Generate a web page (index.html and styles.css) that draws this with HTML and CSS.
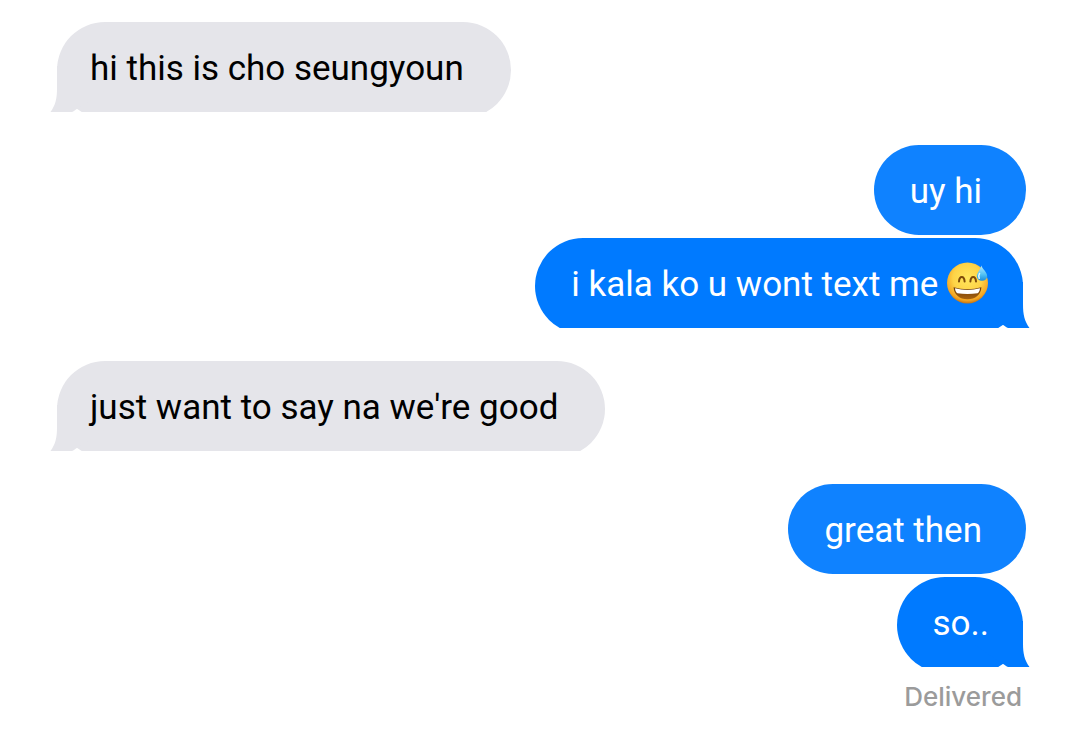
FILE: index.html
```html
<!DOCTYPE html>
<html lang="en">
<head>
    <meta charset="UTF-8">
    <meta name="viewport" content="width=device-width, initial-scale=1.0">
    <title>Messages</title>
    <link rel="stylesheet" href="styles.css">
</head>
<body>
    <!-- shared shapes -->
    <svg class="defs" width="0" height="0" aria-hidden="true">
        <symbol id="tail" viewBox="0 0 54 46" overflow="visible">
            <path d="M6 0V22C6 33 4.5 39 -0.5 46H21C23.5 45 24.5 43.5 27 42.5L54 24V0Z"/>
        </symbol>
    </svg>

    <main class="chat">
        <div class="group received">
            <div class="bubble last">
                <svg class="tail" aria-hidden="true"><use href="#tail"/></svg>
                <p>hi this is cho seungyoun</p>
            </div>
        </div>

        <div class="group sent">
            <div class="bubble"><p>uy hi</p></div>
            <div class="bubble last">
                <svg class="tail" aria-hidden="true"><use href="#tail"/></svg>
                <p>i kala ko u wont text me
                    <svg class="emoji" viewBox="0 0 42 42" role="img" aria-label="Grinning face with sweat">
                        <defs>
                            <radialGradient id="face" cx="50%" cy="38%" r="64%">
                                <stop offset="0" stop-color="#ffe75c"/>
                                <stop offset="0.55" stop-color="#fed347"/>
                                <stop offset="0.85" stop-color="#f3a522"/>
                                <stop offset="1" stop-color="#b8650f"/>
                            </radialGradient>
                            <linearGradient id="mouth" x1="0" y1="0" x2="0" y2="1">
                                <stop offset="0" stop-color="#6b3a08"/>
                                <stop offset="1" stop-color="#a8630f"/>
                            </linearGradient>
                            <linearGradient id="drop" x1="0" y1="0" x2="0" y2="1">
                                <stop offset="0" stop-color="#b9ecff"/>
                                <stop offset="0.6" stop-color="#50c0f4"/>
                                <stop offset="1" stop-color="#1b8ddd"/>
                            </linearGradient>
                        </defs>
                        <circle cx="20.5" cy="21" r="20.5" fill="url(#face)"/>
                        <path d="M12 19.5C12.4 13.4 17.2 13.4 17.6 19.5M23.4 19.5C23.8 13.4 28.6 13.4 29 19.5" fill="none" stroke="#7d4a0a" stroke-width="2" stroke-linecap="round"/>
                        <path d="M6.6 25.2Q20.5 29.2 34.4 25.2C34 32.6 28.4 37.2 20.5 37.2S7 32.6 6.6 25.2Z" fill="url(#mouth)"/>
                        <path d="M8 26.3Q20.5 29.8 33 26.3C32.8 28.8 32 30.4 30.6 31.2Q20.5 32.8 10.4 31.2C9 30.4 8.2 28.8 8 26.3Z" fill="#fff"/>
                        <path d="M34.2 3.4C36 7.4 40.4 10.6 40.2 14.7A5.3 5.3 0 0 1 29.8 14.2C29.9 10.6 33.4 8 34.2 3.4Z" fill="url(#drop)"/>
                        <path d="M32.5 11.5Q31.2 14 32.2 16.2" fill="none" stroke="#e6faff" stroke-width="1.6" stroke-linecap="round"/>
                    </svg>
                </p>
            </div>
        </div>

        <div class="group received">
            <div class="bubble last">
                <svg class="tail" aria-hidden="true"><use href="#tail"/></svg>
                <p>just want to say na we're good</p>
            </div>
        </div>

        <div class="group sent">
            <div class="bubble"><p>great then</p></div>
            <div class="bubble last">
                <svg class="tail" aria-hidden="true"><use href="#tail"/></svg>
                <p>so..</p>
            </div>
            <div class="status">Delivered</div>
        </div>
    </main>
</body>
</html>
```

FILE: styles.css
```css
body {
    margin: 0;
    background: #fff;
    font-family: Roboto, "Liberation Sans", sans-serif;
}

.defs {
    position: absolute;
}

.chat {
    display: flex;
    flex-direction: column;
    gap: 33px;
    padding: 22px 54px 40px 57px;
}

.group {
    display: flex;
    flex-direction: column;
    gap: 3px;
}

.received {
    align-items: flex-start;
    color: #000;
    fill: #e5e5ea;
}

.sent {
    align-items: flex-end;
    color: #fff;
    fill: #007aff;
}

.bubble {
    position: relative;
    z-index: 0;
    box-sizing: border-box;
    max-width: 75%;
    padding: 25px 44px 21px 36px;
    border-radius: 45px;
    background: #0f82ff;
}

.bubble p {
    margin: 0;
    font-size: 35px;
    line-height: 44px;
}

/* the last bubble of a group has a tail and is cut flat at the bottom */
.bubble.last {
    border-radius: 0;
    background: none;
    clip-path: inset(0 -8px);
}

.bubble.last::before {
    content: "";
    position: absolute;
    z-index: -1;
    inset: 0 0 -6px;
    border-radius: 48px;
    background: #e5e5ea;
}

.received .bubble {
    padding-left: 33px;
    padding-right: 47px;
}

.sent .last {
    margin-right: 3px;
    padding-right: 34px;
}

.sent .last::before {
    background: #007aff;
}

.tail {
    position: absolute;
    z-index: -1;
    bottom: 0;
    left: -6px;
    width: 54px;
    height: 46px;
    overflow: visible;
}

.sent .tail {
    left: auto;
    right: -6px;
    transform: scaleX(-1);
}

.emoji {
    width: 42px;
    height: 42px;
    vertical-align: -2px;
    margin: -6px 0;
}

.status {
    margin: 11px 4px 0 0;
    color: #9b9b9b;
    font-family: Inter, "Liberation Sans", sans-serif;
    font-size: 26px;
    font-weight: 500;
    line-height: 32px;
}
```
